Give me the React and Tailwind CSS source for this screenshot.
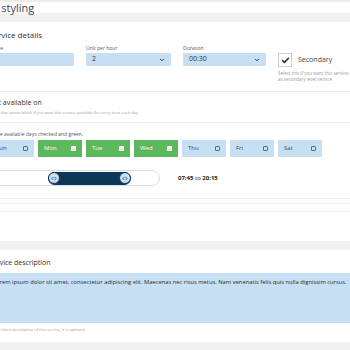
import React from 'react';
import { Check, ChevronDown, ChevronLeft, ChevronRight } from 'lucide-react';

const days = [
    { name: 'Sun', on: false },
    { name: 'Mon', on: true },
    { name: 'Tue', on: true },
    { name: 'Wed', on: true },
    { name: 'Thu', on: false },
    { name: 'Fri', on: false },
    { name: 'Sat', on: false },
];

const DayButton = ({ name, on }) => (
    <div
        className={`w-[44px] h-[17px] flex items-center justify-between px-[6px] text-[6px] ${
            on ? 'bg-[#5cb85c] text-white' : 'bg-[#c6dff3] text-[#3a4a5a]'
        }`}
    >
        <span>{name}</span>
        {on ? (
            <span className="w-[5px] h-[5px] bg-white rounded-[1px] flex items-center justify-center">
                <Check size={4} strokeWidth={4} className="text-[#5cb85c]" />
            </span>
        ) : (
            <span className="w-[5px] h-[5px] border border-[#5a6a7a] rounded-[1px]" />
        )}
    </div>
);

const Handle = () => (
    <div className="w-[12px] h-[12px] rounded-full bg-[#c6dff3] border border-[#0c3758] flex items-center justify-center text-[#0c3758]">
        <ChevronLeft size={5} strokeWidth={3.5} className="-mr-[1px]" />
        <ChevronRight size={5} strokeWidth={3.5} className="-ml-[1px]" />
    </div>
);

export default function App() {
    return (
        <div
            className="w-[350px] h-[350px] overflow-hidden bg-white text-[#333]"
            style={{ fontFamily: '"Open Sans", "Noto Sans", sans-serif' }}
        >
            <div className="h-[2px] bg-[#ececec]" />
            <div className="h-[11px] flex items-center">
                <span className="ml-[-38px] text-[11px] leading-[11px] whitespace-nowrap text-[#444]">Service styling</span>
            </div>
            <div className="h-[9px] bg-[#f1f1f1]" />

            {/* service details */}
            <div className="h-[70px] border-b border-[#ececec]">
                <div className="ml-[-11px] pt-[8px]">
                    <div className="text-[8px] leading-[9px] h-[9px] whitespace-nowrap">Service details</div>
                    <div className="mt-[6px] grid grid-cols-[85px_85px_83px_80px] gap-x-[12px]">
                        <div>
                            <div className="h-[6px] text-[5px] leading-[6px] text-[#555]">Name</div>
                            <div className="mt-[2px] h-[13px] bg-[#c6dff3]" />
                        </div>
                        <div>
                            <div className="h-[6px] text-[5px] leading-[6px] text-[#555]">Unit per hour</div>
                            <div className="mt-[2px] h-[13px] bg-[#c6dff3] flex items-center justify-between px-[6px] text-[7px] text-[#333]">
                                <span>2</span>
                                <ChevronDown size={6} strokeWidth={4} />
                            </div>
                        </div>
                        <div>
                            <div className="h-[6px] text-[5px] leading-[6px] text-[#555]">Duration</div>
                            <div className="mt-[2px] h-[13px] bg-[#c6dff3] flex items-center justify-between px-[6px] text-[7px] text-[#333]">
                                <span>00:30</span>
                                <ChevronDown size={6} strokeWidth={4} />
                            </div>
                        </div>
                        <div className="pt-[8px]">
                            <div className="flex items-center gap-[6px]">
                                <div className="w-[14px] h-[14px] border border-[#cfcfcf] bg-white flex items-center justify-center">
                                    <Check size={9} strokeWidth={4} className="text-[#1e2a36]" />
                                </div>
                                <span className="text-[7px] text-[#444]">Secondary</span>
                            </div>
                            <div className="mt-[3px] w-[90px] text-[4.5px] leading-[6px] text-[#999] whitespace-nowrap">
                                <div>Select this if you want this service considered</div>
                                <div>as secondary level service</div>
                            </div>
                        </div>
                    </div>
                </div>
            </div>

            {/* not available */}
            <div className="h-[31px] border-b border-[#ececec] ml-[-11px] pt-[7px]">
                <div className="text-[7px] leading-[8px] whitespace-nowrap">Not available on</div>
                <div className="mt-[3px] text-[4px] leading-[6px] text-[#999] whitespace-nowrap">
                    Leave this option blank if you want this service available for every hour each day
                </div>
            </div>

            {/* days */}
            <div className="ml-[-10px] pt-[8px]">
                <div className="h-[7px] text-[5px] leading-[7px] text-[#555] whitespace-nowrap">Make available days checked and green.</div>
                <div className="mt-[2px] flex gap-[4px]">
                    {days.map((d) => (
                        <DayButton key={d.name} {...d} />
                    ))}
                </div>
                <div className="mt-[13px] flex items-center gap-[18px]">
                    <div className="w-[170px] h-[16px] rounded-full border border-[#dcdcdc] flex items-center">
                        <div className="ml-[57px] w-[83px] h-[13px] rounded-full bg-[#0c3758] flex items-center justify-between">
                            <Handle />
                            <Handle />
                        </div>
                    </div>
                    <div className="text-[6px] text-[#222] whitespace-nowrap">
                        <span className="font-bold">07:45</span> to <span className="font-bold">20:15</span>
                    </div>
                </div>
            </div>

            <div className="mt-[12px] h-[6px] border-t border-b border-[#f0f0f0]" />
            <div className="h-[8px] border-b border-[#f0f0f0]" />
            <div className="h-[29px]" />
            <div className="h-[9px] bg-[#f1f1f1]" />

            {/* description */}
            <div className="ml-[-11px] pt-[9px]">
                <div className="h-[8px] text-[7px] leading-[8px] whitespace-nowrap">Service description</div>
                <div className="mt-[6px] h-[50px] w-[400px] bg-[#c6dff3] pl-[4px] pt-[5px] text-[5.8px] leading-[9px] text-[#2a2a2a] whitespace-nowrap">
                    Lorem ipsum dolor sit amet, consectetur adipiscing elit. Maecenas nec risus metus. Nam venenatis felis quis nulla dignissim cursus.
                </div>
                <div className="mt-[4px] text-[4px] leading-[6px] text-[#999] whitespace-nowrap">A very short description of this service, it is optional</div>
            </div>
            <div className="mt-[9px] h-[10px] bg-[#f1f1f1]" />
        </div>
    );
}
